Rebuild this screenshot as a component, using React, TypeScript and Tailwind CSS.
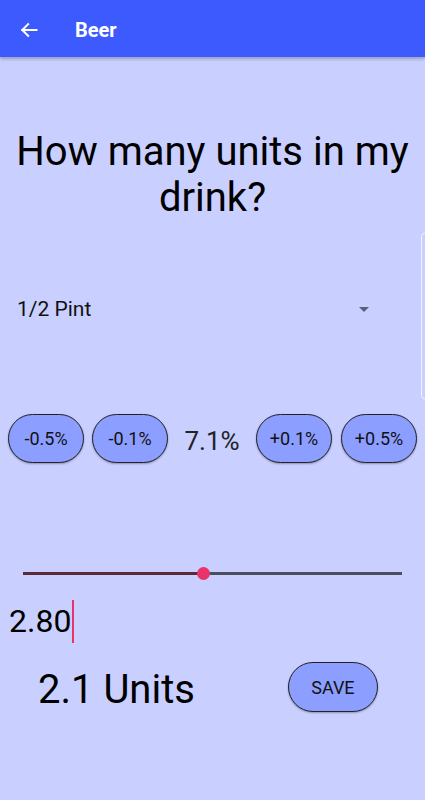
import React from "react";

function Pill({ label }: { label: string }) {
  return (
    <button className="w-[76px] h-[49px] rounded-full border border-[#222] bg-[#8c9eff] text-[18px] text-[#111] flex items-center justify-center shadow-[0_1px_2px_rgba(0,0,0,0.3)]">
      {label}
    </button>
  );
}

export default function App() {
  return (
    <div
      className="w-[425px] h-[800px] bg-[#c9cfff] relative overflow-hidden flex flex-col"
      style={{ fontFamily: "Roboto, 'Liberation Sans', sans-serif" }}
    >
      <div className="h-[57px] bg-[#3d5afe] flex items-center pt-[3px] shadow-[0_2px_3px_rgba(0,0,0,0.25)] shrink-0">
        <svg className="ml-[19px]" width="20" height="20" viewBox="0 0 24 24" fill="none" stroke="white" strokeWidth="2.4" strokeLinecap="square">
          <path d="M21 12H4" />
          <path d="M11 5l-7 7 7 7" />
        </svg>
        <span className="ml-[36px] text-white text-[20px] font-bold">Beer</span>
      </div>

      <h1 className="mt-[72px] text-center text-[40px] leading-[46px] text-black px-[8px]">
        How many units in my drink?
      </h1>

      <div className="mt-[74px] flex items-center justify-between pl-[17px] pr-[55px] h-[30px]">
        <span className="text-[21px] text-[#111]">1/2 Pint</span>
        <svg width="12" height="8" viewBox="0 0 12 8">
          <path d="M1 1h10L6 6z" fill="#5a5f7a" />
        </svg>
      </div>

      <div className="absolute right-[-6px] top-[232px] w-[10px] h-[168px] rounded-[5px] border border-[#f0f2ff] bg-[#c9cfff]" />

      <div className="mt-[89px] flex items-center pl-[8px] h-[49px]">
        <Pill label="-0.5%" />
        <div className="ml-[8px]"><Pill label="-0.1%" /></div>
        <div className="w-[88px] text-center text-[26px] text-[#222] pt-[6px]">7.1%</div>
        <Pill label="+0.1%" />
        <div className="ml-[9px]"><Pill label="+0.5%" /></div>
      </div>

      <div className="mt-[104px] px-[23px] h-[12px] flex items-center relative">
        <div className="relative w-full h-[3px] flex">
          <div className="w-[180px] h-full bg-[#5a2a3a]" />
          <div className="flex-1 h-full bg-[#4a4f5f]" />
          <div className="absolute left-[174px] top-[-5px] w-[13px] h-[13px] rounded-full bg-[#e8336b]" />
        </div>
      </div>

      <div className="mt-[20px] pl-[9px] flex items-center h-[44px]">
        <span className="text-[32px] text-black leading-none">2.80</span>
        <div className="ml-[1px] w-[2px] h-[43px] bg-[#e8336b]" />
      </div>

      <div className="mt-[19px] flex items-center h-[50px]">
        <span className="ml-[38px] mt-[6px] text-[40px] text-black leading-none">2.1 Units</span>
        <button className="ml-[93px] w-[90px] h-[50px] rounded-full border border-[#222] bg-[#8c9eff] text-[18px] text-[#111] shadow-[0_1px_2px_rgba(0,0,0,0.3)]">
          SAVE
        </button>
      </div>
    </div>
  );
}
